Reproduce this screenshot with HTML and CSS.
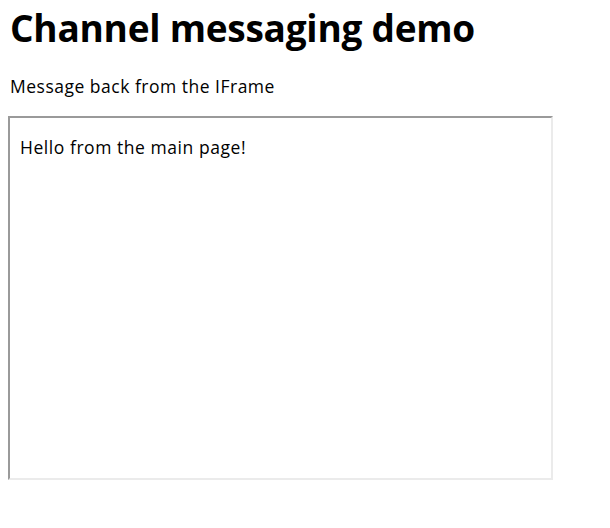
FILE: index.html
```html
<!DOCTYPE html>
<html>
<head>
<meta charset="utf-8">
<link rel="stylesheet" href="styles.css">
</head>
<body>
<div class="page">
  <h1 class="title">Channel messaging demo</h1>
  <p class="output">Message back from the IFrame</p>
  <div class="frame">
    <p class="frame-text">Hello from the main page!</p>
  </div>
</div>
</body>
</html>
```
FILE: styles.css
```css
html, body {
  background: #fff;
}
body {
  margin: 0;
  font-family: "Open Sans", "Noto Sans", sans-serif;
  color: #000;
}
.page {
  padding: 6px 8px 8px;
}
.title {
  font-size: 37px;
  font-weight: 700;
  line-height: 44px;
  letter-spacing: -0.25px;
  margin: 0;
  padding-left: 2px;
}
.output {
  font-size: 17.5px;
  line-height: 22px;
  letter-spacing: 0.5px;
  margin: 25px 0 19px;
  padding-left: 2px;
}
.frame {
  box-sizing: border-box;
  width: 545px;
  height: 364px;
  border-style: solid;
  border-width: 2px;
  border-top-color: #9a9a9a;
  border-left-color: #9a9a9a;
  border-right-color: #ebebeb;
  border-bottom-color: #ebebeb;
  padding: 8px 8px 8px 10px;
}
.frame-text {
  font-size: 17.5px;
  line-height: 22px;
  letter-spacing: 0.55px;
  margin: 10px 0 0;
}
```
